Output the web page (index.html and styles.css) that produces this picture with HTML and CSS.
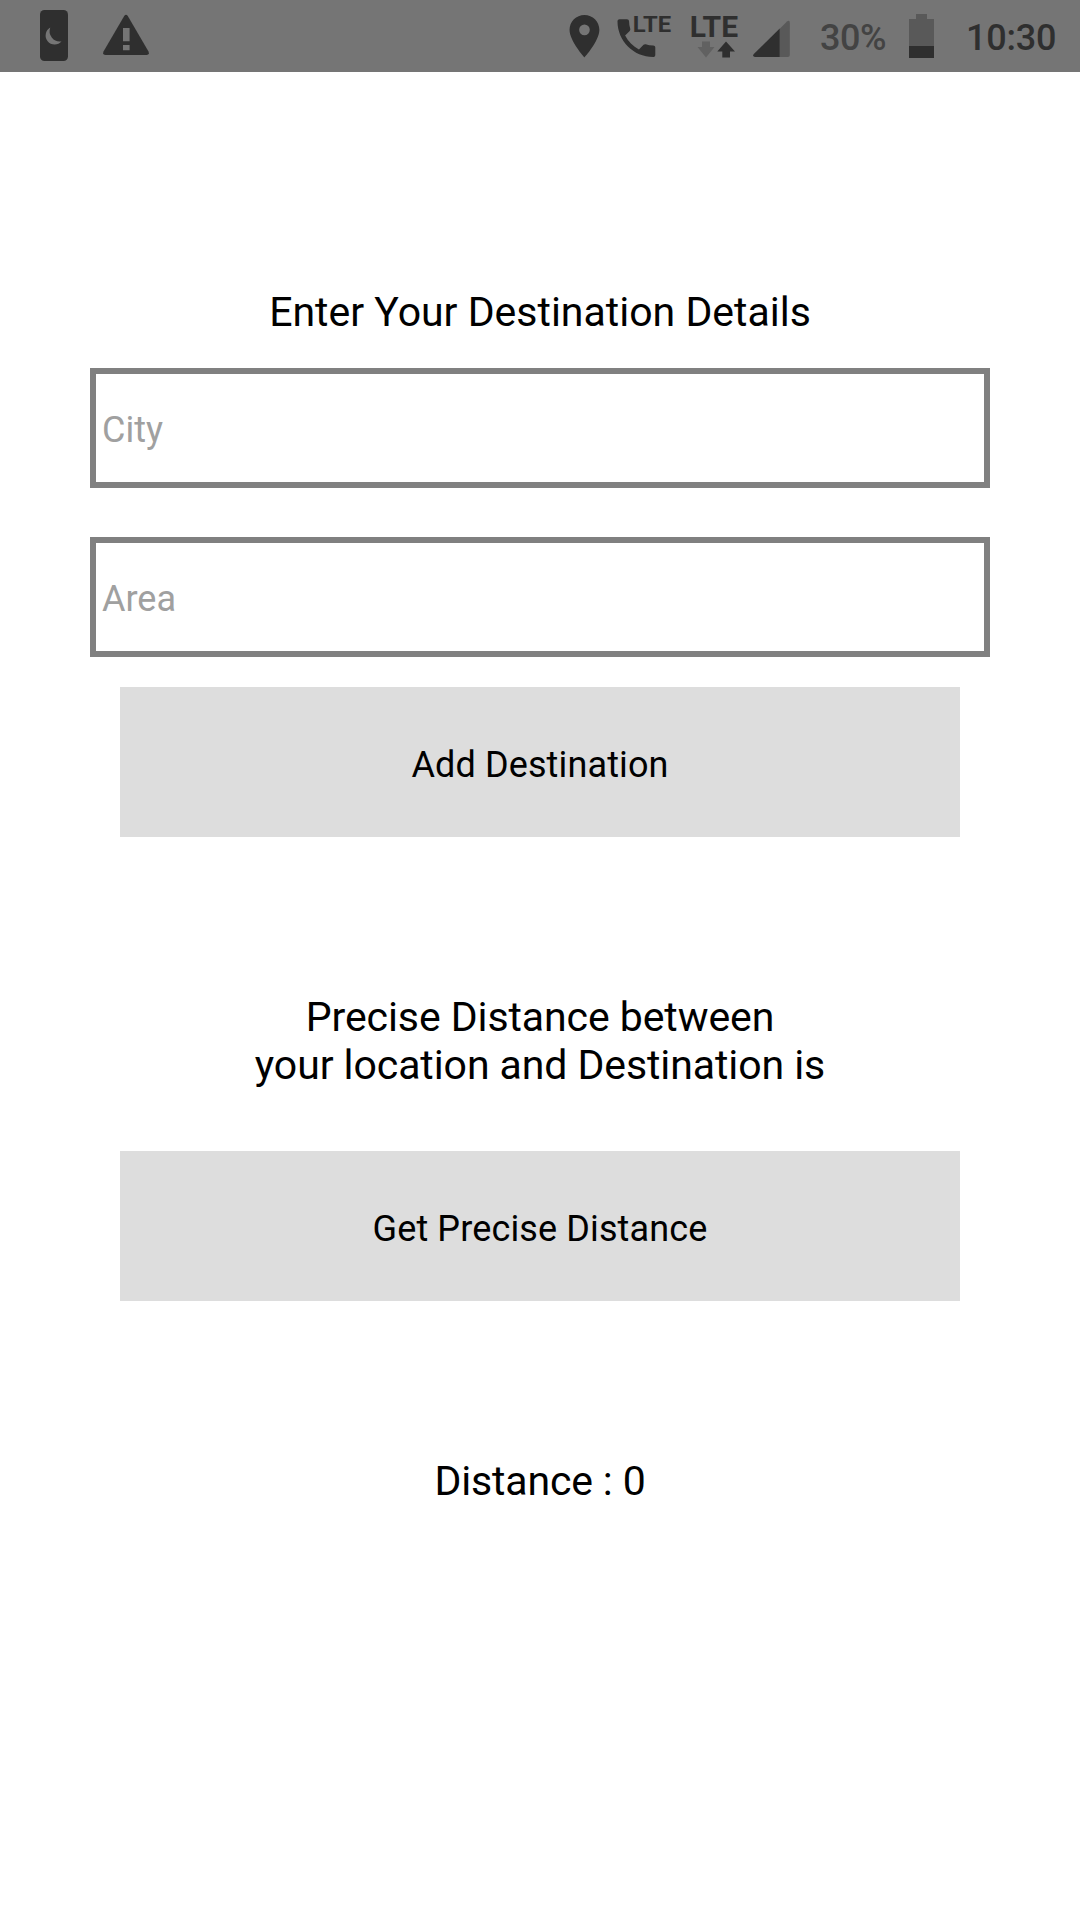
FILE: index.html
```html
<!DOCTYPE html>
<html lang="en">
<head>
<meta charset="utf-8">
<title>Distance</title>
<link rel="stylesheet" href="styles.css">
</head>
<body>
<header class="status-bar">
  <svg class="icon night" width="28" height="72" viewBox="40 0 28 72">
    <rect class="dark" x="40" y="10" width="28" height="51" rx="4.5"/>
    <path class="bar-fill" d="M50.3 27.6A9 9 0 1 0 61.5 41.3A10.2 10.2 0 0 1 50.3 27.6Z"/>
  </svg>
  <svg class="icon warning" width="46" height="72" viewBox="103 0 46 72">
    <path class="dark" d="M124.2 16.1Q126 13.6 127.8 16.1L148.5 51.6Q149.8 55 146.5 55H105.5Q102.2 55 103.5 51.6Z"/>
    <path class="bar-fill" d="M123 28h6.6v13.2H123zM123 45h6.6v5.2H123z"/>
  </svg>
  <svg class="icon pin" width="31" height="72" viewBox="569 0 31 72">
    <path class="dark" fill-rule="evenodd" transform="translate(558.9 10.7) scale(2.13)" d="M12 2C8.13 2 5 5.13 5 9c0 5.25 7 13 7 13s7-7.75 7-13c0-3.87-3.13-7-7-7zm0 9.5a2.5 2.5 0 0 1 0-5 2.5 2.5 0 0 1 0 5z"/>
  </svg>
  <svg class="icon call" width="55" height="72" viewBox="617 0 55 72">
    <path class="dark" transform="translate(611.2 12.9) scale(2.1)" d="M6.62 10.79c1.44 2.83 3.76 5.14 6.59 6.59l2.2-2.2c.27-.27.67-.36 1.02-.24 1.12.37 2.33.57 3.57.57.55 0 1 .45 1 1V20c0 .55-.45 1-1 1-9.39 0-17-7.61-17-17 0-.55.45-1 1-1h3.5c.55 0 1 .45 1 1 0 1.25.2 2.45.57 3.57.11.35.03.74-.25 1.02l-2.2 2.2z"/>
    <text class="lte lte-small" x="632.8" y="32" textLength="38.4" lengthAdjust="spacingAndGlyphs">LTE</text>
  </svg>
  <svg class="icon network" width="48" height="72" viewBox="691 0 48 72">
    <text class="lte lte-large" x="689.7" y="36.6" textLength="48.4" lengthAdjust="spacingAndGlyphs">LTE</text>
    <path class="faint" d="M702 41.5h8V47h4.5L706 57.5 697.5 47h4.5z"/>
    <path class="dark" d="M726 41.5l9 10h-5v6h-7.7v-6h-5z"/>
  </svg>
  <svg class="icon signal" width="38" height="72" viewBox="753 0 38 72">
    <path class="mid" d="M779.5 29L787 21.5Q789.8 19.7 789.8 23V55Q789.8 57 787.8 57H779.5Z"/>
    <path class="dark" d="M779.7 28.6V57H755Q752 56.5 753.8 54Z"/>
  </svg>
  <span class="percent">30%</span>
  <svg class="icon battery" width="25" height="72" viewBox="909 0 25 72">
    <path class="mid" d="M916 14h11v5h7v27h-25V19h7z"/>
    <path class="dark" d="M909 46h25v12h-25z"/>
  </svg>
  <span class="clock">10:30</span>
</header>
<main class="screen">
  <h1 class="heading">Enter Your Destination Details</h1>
  <form class="fields">
    <input class="field" type="text" placeholder="City">
    <input class="field" type="text" placeholder="Area">
  </form>
  <button class="button" type="button">Add Destination</button>
  <p class="message">Precise Distance between<br>your location and Destination is</p>
  <button class="button" type="button">Get Precise Distance</button>
  <p class="result">Distance : 0</p>
</main>
</body>
</html>
```

FILE: styles.css
```css
* {
  box-sizing: border-box;
}

body {
  margin: 0;
  min-height: 1920px;
  background: #fff;
  color: #000;
  font-family: Roboto, sans-serif;
}

.status-bar {
  display: flex;
  height: 72px;
  padding-left: 40px;
  background: #757575;
  font-size: 36px;
  font-weight: 500;
  line-height: 77px;
  white-space: nowrap;
}

.icon { flex: none; display: block; }
.dark { fill: #2f2f2f; }
.mid { fill: #595959; }
.faint { fill: #616161; }
.bar-fill { fill: #757575; }

.lte {
  fill: #2f2f2f;
  font-family: Roboto, sans-serif;
  font-weight: 700;
}
.lte-small { font-size: 22.5px; }
.lte-large { font-size: 29px; }

.warning { margin-left: 35px; }
.pin { margin-left: 420px; }
.call { margin-left: 17px; }
.network { margin-left: 19px; }
.signal { margin-left: 14px; }

.percent {
  width: 89px;
  margin-left: 29px;
  color: #434343;
  letter-spacing: -0.4px;
}

.clock {
  margin-left: 32px;
  color: #2f2f2f;
  letter-spacing: -0.2px;
}

.screen {
  display: flex;
  flex-direction: column;
  align-items: center;
  padding: 216px 90px 0;
}

.heading,
.message,
.result {
  margin: 0;
  font-size: 41px;
  font-weight: 400;
  line-height: 48px;
  text-align: center;
}

.fields {
  display: flex;
  flex-direction: column;
  gap: 49px;
  width: 100%;
  margin: 32px 0 30px;
}

.field {
  width: 100%;
  height: 120px;
  padding: 4px 6px 0;
  border: 6px solid #808080;
  border-radius: 0;
  background: #fff;
  font: 36px Roboto, sans-serif;
}

.field::placeholder {
  color: #a0a0a0;
}

.button {
  width: 840px;
  height: 150px;
  padding: 5px 0 0;
  border: 0;
  background: #ddd;
  color: #000;
  font: 36px Roboto, sans-serif;
  letter-spacing: 0.13px;
}

.message {
  margin: 156px 0 62px;
  letter-spacing: -0.08px;
}

.result {
  margin-top: 156px;
  letter-spacing: -0.15px;
}
```
